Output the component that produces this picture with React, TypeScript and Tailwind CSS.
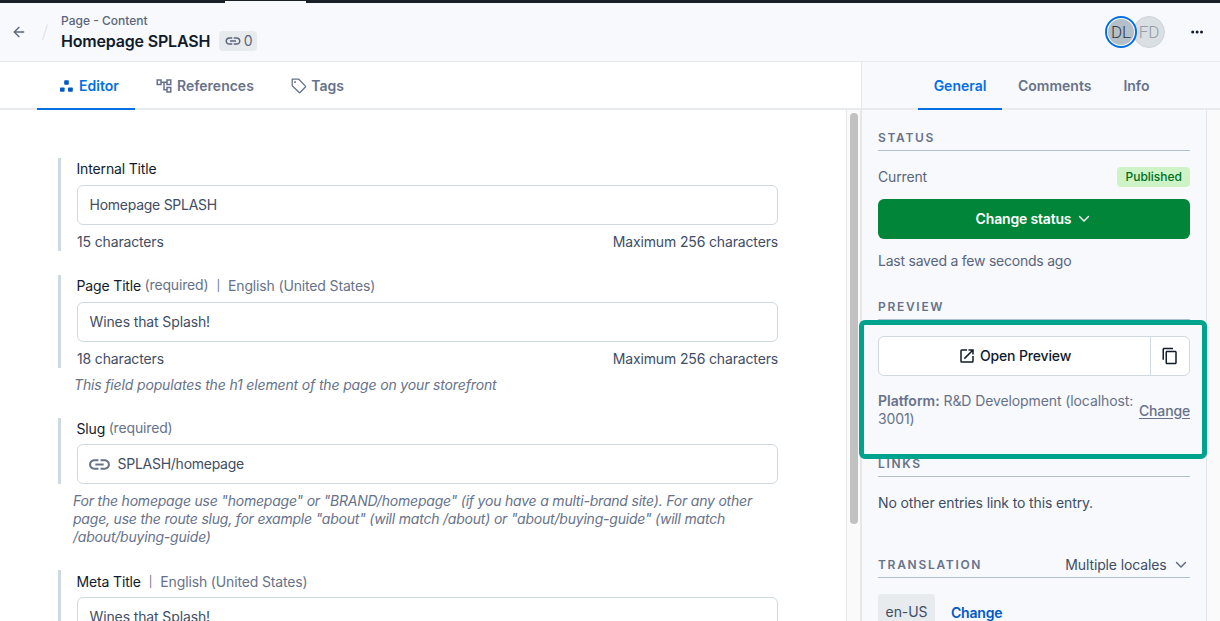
import React from "react";
import { MdLink, MdOpenInNew, MdContentCopy, MdOutlineAccountTree } from "react-icons/md";
import { ArrowLeft } from "lucide-react";

function Caret({ className }: { className?: string }) {
  return (
    <svg viewBox="0 0 12 8" className={className} fill="none" stroke="currentColor" strokeWidth="1.4" strokeLinecap="round" strokeLinejoin="round">
      <path d="M1.5 1.6 6 6.1l4.5-4.5" />
    </svg>
  );
}

function EditorIcon() {
  return (
    <svg width="14" height="13" viewBox="0 0 14 13" fill="#0059c8">
      <rect x="4.2" y="0.3" width="4.6" height="4.4" rx="0.8" />
      <rect x="0" y="7.4" width="4.6" height="4.4" rx="0.8" />
      <rect x="8" y="7.4" width="4.8" height="4.4" rx="0.8" />
    </svg>
  );
}

function TagIcon() {
  return (
    <svg width="16" height="16" viewBox="0 0 16 16" fill="none" stroke="currentColor" strokeWidth="1.3" strokeLinejoin="round">
      <path d="M1.2 1.2h6.6l6.6 6.9c.3.3.3.6 0 .9l-5.3 5.5c-.3.3-.6.3-.9 0L1.2 7.8z" />
      <circle cx="4" cy="4" r="0.95" fill="currentColor" stroke="none" />
    </svg>
  );
}

function Tab({ active, className, children }: { active?: boolean; className: string; children: React.ReactNode }) {
  return (
    <div
      className={`flex h-12 shrink-0 items-center border-b-2 pt-[2px] text-sm font-semibold ${
        active ? "border-[#036fe3] text-[#036fe3]" : "border-[#e7ebee] text-[#67728a]"
      } ${className}`}
    >
      {children}
    </div>
  );
}

function Input({ value, icon }: { value: string; icon?: boolean }) {
  return (
    <div
      className={`flex h-10 shrink-0 items-center rounded-md border border-[#cfd9e0] bg-white pr-3 pl-[11.5px] text-[#414d63] ${
        value.startsWith("Wines") ? "tracking-[-0.12px]" : "tracking-[-0.26px]"
      }`}
    >
      {icon && <MdLink className="mr-[5.5px] -ml-[2.5px] size-[25px] text-[#67728a]" />}
      {value}
    </div>
  );
}

type FieldProps = { label: string; required?: boolean; locale?: boolean; value: string; count?: number; icon?: boolean; className: string };

function Field({ label, required, locale, value, count, icon, className }: FieldProps) {
  return (
    <div className={`shrink-0 border-l-[3px] border-[#cfd9e0] pl-4 ${className}`}>
      <div className="flex h-full flex-col">
        <div
          className={`flex shrink-0 items-start leading-5 tracking-[-0.15px] ${icon ? "h-[26px]" : "h-[27px]"} ${
            count === undefined && !icon ? "pt-[2px]" : "pt-[1px]"
          }`}
        >
          <span className="-ml-[0.5px] text-[#111b2b]">{label}</span>
          {required && <span className="-mt-px ml-[3.5px] text-[#67728a]">(required)</span>}
          {locale && (
            <span className="ml-2 flex gap-2 text-[#67728a]">
              <span className="text-[11px] leading-5">|</span>
              <span>English (United States)</span>
            </span>
          )}
        </div>
        <Input value={value} icon={icon} />
        {count !== undefined && (
          <div className="mt-[7px] flex justify-between leading-5 tracking-[-0.15px] text-[#414d63]">
            <span>{count} characters</span>
            <span>Maximum 256 characters</span>
          </div>
        )}
      </div>
    </div>
  );
}

function SectionTitle({ children, right, className = "" }: { children: React.ReactNode; right?: React.ReactNode; className?: string }) {
  return (
    <div className={`flex h-6 shrink-0 items-center justify-between border-b border-[#aec1cc] ${className}`}>
      <span className="text-xs leading-4 font-semibold tracking-[1.7px] text-[#67728a]">{children}</span>
      {right}
    </div>
  );
}

export default function App() {
  return (
    <div className="flex h-[621px] w-[1220px] flex-col overflow-hidden bg-white font-['Inter',sans-serif] text-sm">
      <div className="flex h-[3px] shrink-0 items-end bg-[#192028] pl-[225px]">
        <div className="h-[2px] w-[81px] bg-[#f7f9fa]" />
      </div>
      <header className="flex h-[59px] shrink-0 border-b border-[#e7ebee] bg-[#f7f9fc]">
        <ArrowLeft className="mt-[21px] ml-[11px] size-4 text-[#5a657c]" strokeWidth={2} />
        <svg className="mt-[20px] ml-[14px] h-5 w-2" viewBox="0 0 8 20" fill="none" stroke="#dfe4e8" strokeWidth="1.2">
          <path d="M1.5 17 6.5 1.5" />
        </svg>
        <div className="ml-3 flex flex-col">
          <div className="mt-[10px] text-xs leading-4 font-medium text-[#5a657c]">Page - Content</div>
          <div className="flex items-center gap-[9px]">
            <h1 className="text-base leading-6 font-semibold tracking-[-0.18px] text-[#111b2b]">Homepage SPLASH</h1>
            <span className="flex h-5 w-[38px] items-center justify-center gap-[2px] rounded bg-[#e7ebee] text-sm text-[#5a657c]">
              <MdLink className="size-[18px]" />0
            </span>
          </div>
        </div>
        <div className="mt-[13px] ml-auto flex">
          <div className="z-10 flex size-8 items-center justify-center rounded-full border-2 border-[#036fe3] bg-white">
            <div className="flex size-[26px] items-center justify-center rounded-full bg-[#b4bfc7] pt-px font-['Roboto',sans-serif] text-[17px] leading-none font-light text-[#2f3943]">DL</div>
          </div>
          <div className="-ml-1 flex size-8 items-center justify-center rounded-full border border-[#cfd5d9] bg-[#dadfe3] pt-px font-['Roboto',sans-serif] text-[17px] leading-none font-light text-[#969ca1]">FD</div>
        </div>
        <svg className="mt-[27px] mr-[16px] ml-[26px]" width="13" height="4" viewBox="0 0 13 4" fill="#111b2b">
          <circle cx="1.7" cy="2" r="1.5" />
          <circle cx="6.1" cy="2" r="1.5" />
          <circle cx="10.5" cy="2" r="1.5" />
        </svg>
      </header>
      <div className="flex min-h-0 flex-1">
        <main className="flex w-[861px] shrink-0 flex-col">
          <nav className="flex h-12 shrink-0">
            <Tab className="w-[37px]">{null}</Tab>
            <Tab active className="w-[98px] gap-[5px] pl-[23px]">
              <EditorIcon />Editor
            </Tab>
            <Tab className="gap-1 pl-5">
              <MdOutlineAccountTree className="size-[18px]" />References
            </Tab>
            <Tab className="flex-1 gap-[4.5px] pl-[37px]">
              <TagIcon />
              <span>Tags</span>
            </Tab>
          </nav>
          <div className="flex min-h-0 flex-1">
            <div className="flex w-[846px] shrink-0 flex-col overflow-hidden pt-12 pr-[68px] pl-[58px]">
              <Field label="Internal Title" value="Homepage SPLASH" count={15} className="h-[93px]" />
              <Field label="Page Title" required locale value="Wines that Splash!" count={18} className="mt-6 h-[93px]" />
              <p className="mt-2 shrink-0 pl-4 leading-[18px] tracking-[-0.15px] text-[#67728a] italic">This field populates the h1 element of the page on your storefront</p>
              <Field label="Slug" required icon value="SPLASH/homepage" className="mt-6 h-[66px]" />
              <p className="mt-2 shrink-0 pl-[15px] leading-[18px] tracking-[-0.205px] text-[#67728a] italic">
                For the homepage use "homepage" or "BRAND/homepage" (if you have a multi-brand site). For any other
                <br />
                page, use the route slug, for example "about" (will match /about) or "about/buying-guide" (will match
                <br />
                /about/buying-guide)
              </p>
              <Field label="Meta Title" locale value="Wines that Splash!" className="mt-6 h-[93px]" />
            </div>
            <div className="flex flex-1 border-x border-[#e8e8e8] bg-[#fafafa] pt-[3px] pl-[3px]">
              <div className="h-[411px] w-2 rounded-full bg-[#c1c1c1]" />
            </div>
          </div>
        </main>
        <aside className="flex w-[359px] flex-col border-l border-[#e3e7ea] bg-[#f7f9fc]">
          <nav className="flex h-12 shrink-0">
            <Tab className="w-14">{null}</Tab>
            <Tab active className="w-[84px] justify-center">General</Tab>
            <Tab className="pl-4">Comments</Tab>
            <Tab className="flex-1 pl-8">Info</Tab>
          </nav>
          <div className="flex min-h-0 flex-1">
            <div className="relative flex w-[345px] shrink-0 flex-col border-r border-[#e3e5e8] px-4 pt-[17px]">
              <SectionTitle className="pb-[1px]">STATUS</SectionTitle>
              <div className="mt-4 flex h-5 shrink-0 items-center justify-between tracking-[-0.15px] text-[#5a657c]">
                Current
                <span className="rounded bg-[#cdf3c6] px-2 text-xs leading-5 font-medium tracking-normal text-[#006d23]">Published</span>
              </div>
              <button className="mt-3 flex h-10 shrink-0 items-center justify-center gap-[7px] rounded-md bg-[#008539] pr-[2px] font-semibold tracking-[-0.17px] text-white">
                Change status
                <Caret className="h-2 w-3" />
              </button>
              <p className="mt-3 shrink-0 leading-5 tracking-[-0.23px] text-[#5a657c]">Last saved a few seconds ago</p>
              <SectionTitle className="mt-[25px] pb-[1px]">PREVIEW</SectionTitle>
              <div className="mt-4 flex h-10 shrink-0 rounded-md border border-[#cfd9e0] bg-white text-[#111b2b]">
                <button className="flex flex-1 items-center justify-center gap-1 font-medium tracking-[-0.15px]">
                  <MdOpenInNew className="size-[18px]" />Open Preview
                </button>
                <button className="flex w-[39px] items-center justify-center border-l border-[#cfd9e0]">
                  <MdContentCopy className="size-[18px]" />
                </button>
              </div>
              <div className="mt-4 flex h-9 shrink-0 items-center justify-between leading-[18px] tracking-[-0.1px] text-[#67728a]">
                <p className="whitespace-nowrap">
                  <b className="font-semibold tracking-normal">Platform:</b> R&amp;D Development (localhost:
                  <br />
                  3001)
                </p>
                <a className="pt-px font-medium tracking-[-0.15px] underline underline-offset-2">Change</a>
              </div>
              <SectionTitle className="mt-[25px] pb-[1px]">LINKS</SectionTitle>
              <p className="mt-4 shrink-0 leading-5 tracking-[-0.13px] text-[#414d63]">No other entries link to this entry.</p>
              <SectionTitle
                className="mt-[41px] pb-[2px]"
                right={
                  <span className="flex items-center gap-[8.5px] pr-[3px] leading-5 tracking-[-0.13px] text-[#414d63]">
                    Multiple locales
                    <Caret className="h-2 w-3 text-[#5a657c]" />
                  </span>
                }
              >
                TRANSLATION
              </SectionTitle>
              <div className="mt-4 flex h-9 shrink-0 items-center gap-4">
                <span className="flex h-full w-[57px] items-center justify-center rounded bg-[#e7ebee] tracking-[-0.1px] text-[#414d63]">en-US</span>
                <a className="pt-[2px] font-semibold tracking-[-0.2px] text-[#0059c8]">Change</a>
              </div>
              <div className="absolute top-[210px] -left-[3px] h-[139px] w-[348px] rounded-md border-[5px] border-[#00a38d]" />
            </div>
            <div className="flex-1 bg-[#fafafa]" />
          </div>
        </aside>
      </div>
    </div>
  );
}
